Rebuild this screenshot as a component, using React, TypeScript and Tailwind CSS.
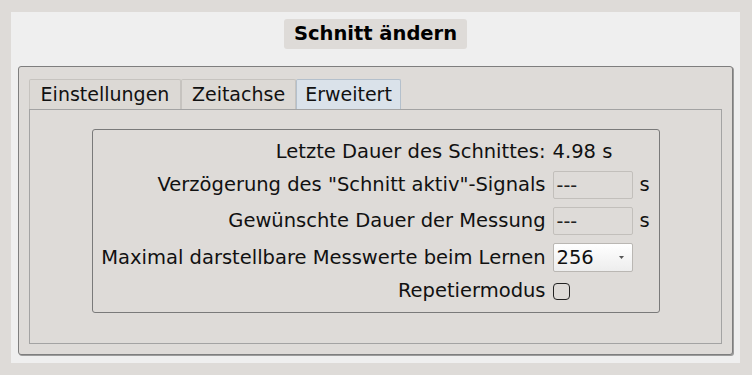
import { useState } from 'react';

const font = { fontFamily: '"DejaVu Sans", "Liberation Sans", sans-serif' };

function Tab({ label, width, active, onClick }: { label: string; width: string; active?: boolean; onClick: () => void }) {
  return (
    <button
      onClick={onClick}
      className={
        'h-[30px] text-center text-[19px] leading-none border border-b-0 rounded-t-[2px] ' +
        width + ' ' +
        (active ? 'bg-[#dae2ea] border-[#b4c0cc]' : 'bg-[#dcd9d5] border-[#c6c3bf]')
      }
    >
      {label}
    </button>
  );
}

function Field({ value }: { value: string }) {
  return (
    <div className="h-[28px] w-[80px] border border-[#c2bfbb] rounded-[2px] bg-[#dedbd8] pl-[3px] flex items-center text-[19px] leading-none text-[#222]">
      {value}
    </div>
  );
}

export default function App() {
  const [tab, setTab] = useState(2);
  const [repeat, setRepeat] = useState(false);

  return (
    <div style={font} className="w-[752px] h-[375px] bg-[#dedbd8] pt-[12px] pl-[11px] text-[#111]">
      <div className="w-[729px] h-[351px] bg-[#efefef] px-[7px] pt-[7px]">
        <div className="flex justify-center">
          <div className="h-[30px] px-[10px] bg-[#dedbd8] rounded-[3px] flex items-center text-[19.5px] font-bold text-black">
            Schnitt ändern
          </div>
        </div>

        <div className="mt-[17px] h-[289px] border border-[#7e7e7e] rounded-[3px] shadow-[1px_1px_0_#9c9c9c] bg-[#dedbd8] px-[10px] pt-[12px]">
          <div className="flex">
            <Tab label="Einstellungen" width="w-[152px]" active={tab === 0} onClick={() => setTab(0)} />
            <Tab label="Zeitachse" width="w-[115px]" active={tab === 1} onClick={() => setTab(1)} />
            <Tab label="Erweitert" width="w-[105px]" active={tab === 2} onClick={() => setTab(2)} />
          </div>
          <div className="h-[235px] border border-[#a3a3a3] pt-[19px]">
            <div className="w-[568px] mx-auto h-[184px] border border-[#7a7a7a] rounded-[3px] pt-[11px] flex justify-center">
              <div className="grid grid-cols-[auto_80px_auto] grid-rows-[22px_28px_28px_29px_22px] gap-y-[8px] gap-x-[7px] h-fit text-[19.5px] leading-none items-center">
                <span className="text-right">Letzte Dauer des Schnittes:</span>
                <span className="col-span-2">4.98 s</span>

                <span className="text-right">Verzögerung des "Schnitt aktiv"-Signals</span>
                <Field value="---" />
                <span>s</span>

                <span className="text-right">Gewünschte Dauer der Messung</span>
                <Field value="---" />
                <span>s</span>

                <span className="text-right">Maximal darstellbare Messwerte beim Lernen</span>
                <div className="h-[29px] w-[80px] border border-[#bab7b3] rounded-[2px] bg-gradient-to-b from-[#ffffff] to-[#ededed] pl-[3px] pr-[8px] flex items-center justify-between text-[19.5px] leading-none">
                  <span>256</span>
                  <svg width="5" height="3" viewBox="0 0 5 3"><path d="M0 0h5L2.5 3z" fill="#555" /></svg>
                </div>
                <span />

                <span className="text-right">Repetiermodus</span>
                <button
                  onClick={() => setRepeat(!repeat)}
                  className="w-[17px] h-[17px] border-[1.5px] border-[#222] rounded-[4px] flex items-center justify-center"
                >
                  {repeat && (
                    <svg width="11" height="11" viewBox="0 0 11 11"><path d="M1.5 5.5l3 3 5-6" stroke="#222" strokeWidth="1.8" fill="none" /></svg>
                  )}
                </button>
                <span />
              </div>
            </div>
          </div>
        </div>
      </div>
    </div>
  );
}
